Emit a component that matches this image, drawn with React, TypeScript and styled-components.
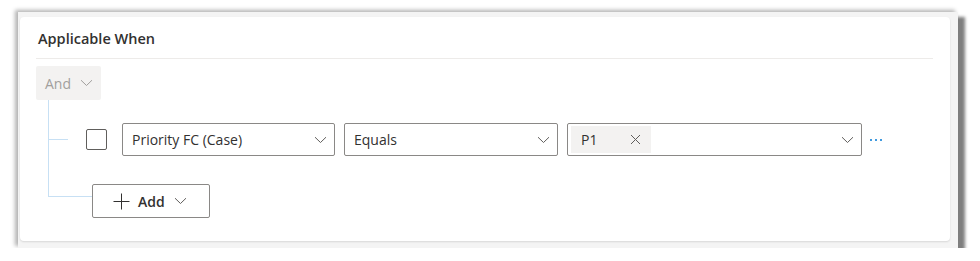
import styled, { createGlobalStyle } from "styled-components";

const GlobalStyle = createGlobalStyle`
  html, body {
    margin: 0;
    padding: 0;
    background: #ffffff;
  }
  body {
    font-family: "Open Sans", "Noto Sans", sans-serif;
    color: #323130;
  }
`;

const Frame = styled.div`
  box-sizing: border-box;
  margin: 12px 0 0 18px;
  width: 940px;
  height: 236px;
  padding: 5px 8px 7px 2px;
  background: #f4f4f4;
  box-shadow: 7px 5px 3px rgba(0, 0, 0, 0.5), -3px -2px 4px rgba(0, 0, 0, 0.3);
`;

const Card = styled.section`
  box-sizing: border-box;
  height: 100%;
  padding: 0 17px 0 16px;
  background: #ffffff;
  border-radius: 4px;
  box-shadow: 0 1px 2px rgba(0, 0, 0, 0.12);
`;

const Header = styled.h2`
  margin: 0;
  padding: 12px 2px 9px;
  font-size: 14.5px;
  line-height: 20px;
  font-weight: 600;
  color: #323130;
  border-bottom: 1px solid #edebe9;
`;

const Body = styled.div`
  padding-top: 7px;
`;

const OperatorButton = styled.button`
  box-sizing: border-box;
  display: flex;
  align-items: center;
  gap: 9px;
  width: 65px;
  height: 34px;
  padding: 0 0 0 9px;
  border: none;
  border-radius: 2px;
  background: #f3f2f1;
  color: #a19f9d;
  font-family: inherit;
  font-size: 14px;
`;

const Tree = styled.div`
  position: relative;
  margin-left: 12px;
  padding-top: 23px;

  &::before {
    content: "";
    position: absolute;
    left: 0;
    top: 0;
    bottom: 22px;
    width: 1px;
    background: #c7e0f4;
  }
`;

const Branch = styled.div<{ $offset: number; $reach: number }>`
  position: relative;
  display: flex;
  align-items: center;

  &::before {
    content: "";
    position: absolute;
    left: 0;
    top: ${(p) => p.$offset}px;
    width: ${(p) => p.$reach}px;
    height: 1px;
    background: #c7e0f4;
  }
`;

const ConditionRow = styled(Branch)`
  padding-left: 38px;
  gap: 9px;
`;

const AddRow = styled(Branch)`
  margin-top: 28px;
  padding-left: 44px;
`;

const Checkbox = styled.span`
  box-sizing: border-box;
  width: 21px;
  height: 21px;
  margin-right: 6px;
  border: 1px solid #605e5c;
  border-radius: 2px;
`;

const Select = styled.div<{ $width: number; $pad?: number }>`
  box-sizing: border-box;
  display: flex;
  align-items: center;
  justify-content: space-between;
  width: ${(p) => p.$width}px;
  height: 33px;
  padding: 0 7px 0 ${(p) => p.$pad ?? 9}px;
  border: 1px solid #8a8886;
  border-radius: 2px;
  font-size: 14px;
  color: #323130;
`;

const Chip = styled.span`
  display: flex;
  align-items: center;
  justify-content: space-between;
  width: 80px;
  height: 27px;
  box-sizing: border-box;
  padding: 0 10px 0 10px;
  background: #f3f2f1;
  font-size: 14px;
`;

const More = styled.span`
  display: flex;
  gap: 3px;
  margin-left: -1px;

  & > i {
    width: 2px;
    height: 2px;
    border-radius: 50%;
    background: #0078d4;
  }
`;

const AddButton = styled.button`
  box-sizing: border-box;
  display: flex;
  align-items: center;
  width: 118px;
  height: 34px;
  padding: 0 0 0 20px;
  border: 1px solid #8a8886;
  border-radius: 2px;
  background: #ffffff;
  color: #323130;
  font-family: inherit;
  font-size: 14px;
  font-weight: 600;
`;

const AddLabel = styled.span`
  margin: 0 9px 0 8px;
`;

const Chevron = ({ color = "#605e5c" }: { color?: string }) => (
  <svg width="13" height="8" viewBox="0 0 13 8" fill="none">
    <path d="M1 1.2 L6.5 6.5 L12 1.2" stroke={color} strokeWidth="1" />
  </svg>
);

const Cross = () => (
  <svg width="11" height="11" viewBox="0 0 11 11" fill="none">
    <path d="M1 1 L10 10 M10 1 L1 10" stroke="#605e5c" strokeWidth="1" />
  </svg>
);

const Plus = () => (
  <svg width="17" height="17" viewBox="0 0 17 17" fill="none">
    <path d="M8.5 0.5 V16.5 M0.5 8.5 H16.5" stroke="#323130" strokeWidth="1" />
  </svg>
);

export default function App() {
  return (
    <>
      <GlobalStyle />
      <Frame>
        <Card>
          <Header>Applicable When</Header>
          <Body>
            <OperatorButton>
              And
              <Chevron color="#a19f9d" />
            </OperatorButton>
            <Tree>
              <ConditionRow $offset={16} $reach={20}>
                <Checkbox />
                <Select $width={213}>
                  Priority FC (Case)
                  <Chevron />
                </Select>
                <Select $width={214}>
                  Equals
                  <Chevron />
                </Select>
                <Select $width={295} $pad={3}>
                  <Chip>
                    P1
                    <Cross />
                  </Chip>
                  <Chevron />
                </Select>
                <More>
                  <i />
                  <i />
                  <i />
                </More>
              </ConditionRow>
              <AddRow $offset={12} $reach={44}>
                <AddButton>
                  <Plus />
                  <AddLabel>Add</AddLabel>
                  <Chevron />
                </AddButton>
              </AddRow>
            </Tree>
          </Body>
        </Card>
      </Frame>
    </>
  );
}
